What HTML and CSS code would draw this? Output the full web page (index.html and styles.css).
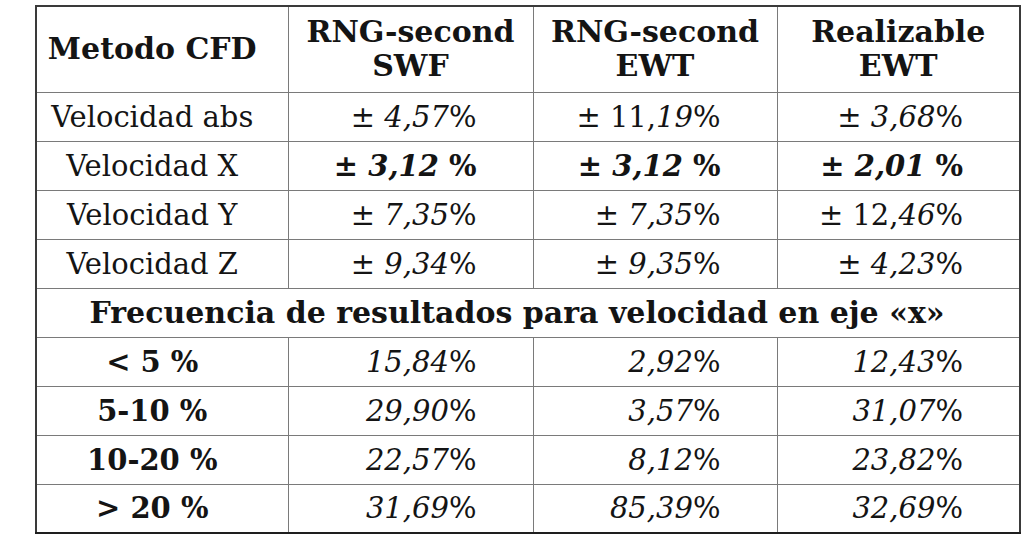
FILE: index.html
```html
<!DOCTYPE html>
<html lang="es">
<head>
<meta charset="utf-8">
<title>Metodo CFD</title>
<link rel="stylesheet" href="styles.css">
</head>
<body>
<table class="cfd">
  <colgroup>
    <col class="c1"><col class="c2"><col class="c3"><col class="c4">
  </colgroup>
  <thead>
    <tr class="head">
      <th class="label">Metodo CFD</th>
      <th>RNG-second<br>SWF</th>
      <th>RNG-second<br>EWT</th>
      <th>Realizable<br>EWT</th>
    </tr>
  </thead>
  <tbody>
    <tr>
      <td class="label">Velocidad abs</td>
      <td class="num">± <i>4,57</i>%</td>
      <td class="num">± 11,<i>19</i>%</td>
      <td class="num">± <i>3,68</i>%</td>
    </tr>
    <tr class="strong">
      <td class="label">Velocidad X</td>
      <td class="num">± <i>3,12</i> %</td>
      <td class="num">± <i>3,12</i> %</td>
      <td class="num">± <i>2,01</i> %</td>
    </tr>
    <tr>
      <td class="label">Velocidad Y</td>
      <td class="num">± <i>7,35</i>%</td>
      <td class="num">± <i>7,35</i>%</td>
      <td class="num">± 12,<i>46</i>%</td>
    </tr>
    <tr>
      <td class="label">Velocidad Z</td>
      <td class="num">± <i>9,34</i>%</td>
      <td class="num">± <i>9,35</i>%</td>
      <td class="num">± <i>4,23</i>%</td>
    </tr>
    <tr>
      <th class="section" colspan="4">Frecuencia de resultados para velocidad en eje «x»</th>
    </tr>
    <tr>
      <td class="label bold">&lt; 5 %</td>
      <td class="num"><i>15,84</i>%</td>
      <td class="num"><i>2,92</i>%</td>
      <td class="num"><i>12,43</i>%</td>
    </tr>
    <tr>
      <td class="label bold">5-10 %</td>
      <td class="num"><i>29,90</i>%</td>
      <td class="num"><i>3,57</i>%</td>
      <td class="num"><i>31,07</i>%</td>
    </tr>
    <tr>
      <td class="label bold">10-20 %</td>
      <td class="num"><i>22,57</i>%</td>
      <td class="num"><i>8,12</i>%</td>
      <td class="num"><i>23,82</i>%</td>
    </tr>
    <tr>
      <td class="label bold">&gt; 20 %</td>
      <td class="num"><i>31,69</i>%</td>
      <td class="num"><i>85,39</i>%</td>
      <td class="num"><i>32,69</i>%</td>
    </tr>
  </tbody>
</table>
</body>
</html>
```

FILE: styles.css
```css
html, body {
  margin: 0;
  padding: 0;
  background: #ffffff;
}

body {
  padding: 5px 0 0 35px;
  font-family: "DejaVu Serif", "Liberation Serif", serif;
  color: #141414;
}

.cfd {
  border-collapse: collapse;
  table-layout: fixed;
  width: 984px;
  border: 2px solid #3a3a3a;
  border-bottom-color: #1e1e1e;
  font-size: 29px;
}

.c1 { width: 252px; }
.c2 { width: 245px; }
.c3 { width: 244px; }
.c4 { width: 243px; }

.cfd th,
.cfd td {
  border: 1.5px solid #7a7a7a;
  padding: 0;
  text-align: center;
  vertical-align: middle;
  white-space: nowrap;
}

.cfd tr {
  height: 49px;
}

.cfd tr.head {
  height: 86px;
}

.cfd th {
  font-weight: bold;
  font-size: 30px;
  line-height: 34px;
}

.cfd .label {
  padding-right: 20px;
}

.cfd .num {
  text-align: right;
  padding-right: 56px;
}

.cfd i {
  font-style: italic;
}

.cfd .strong td.num {
  font-weight: bold;
}

.cfd .bold {
  font-weight: bold;
}

.cfd .section {
  font-size: 30px;
  padding-right: 22px;
}
```
